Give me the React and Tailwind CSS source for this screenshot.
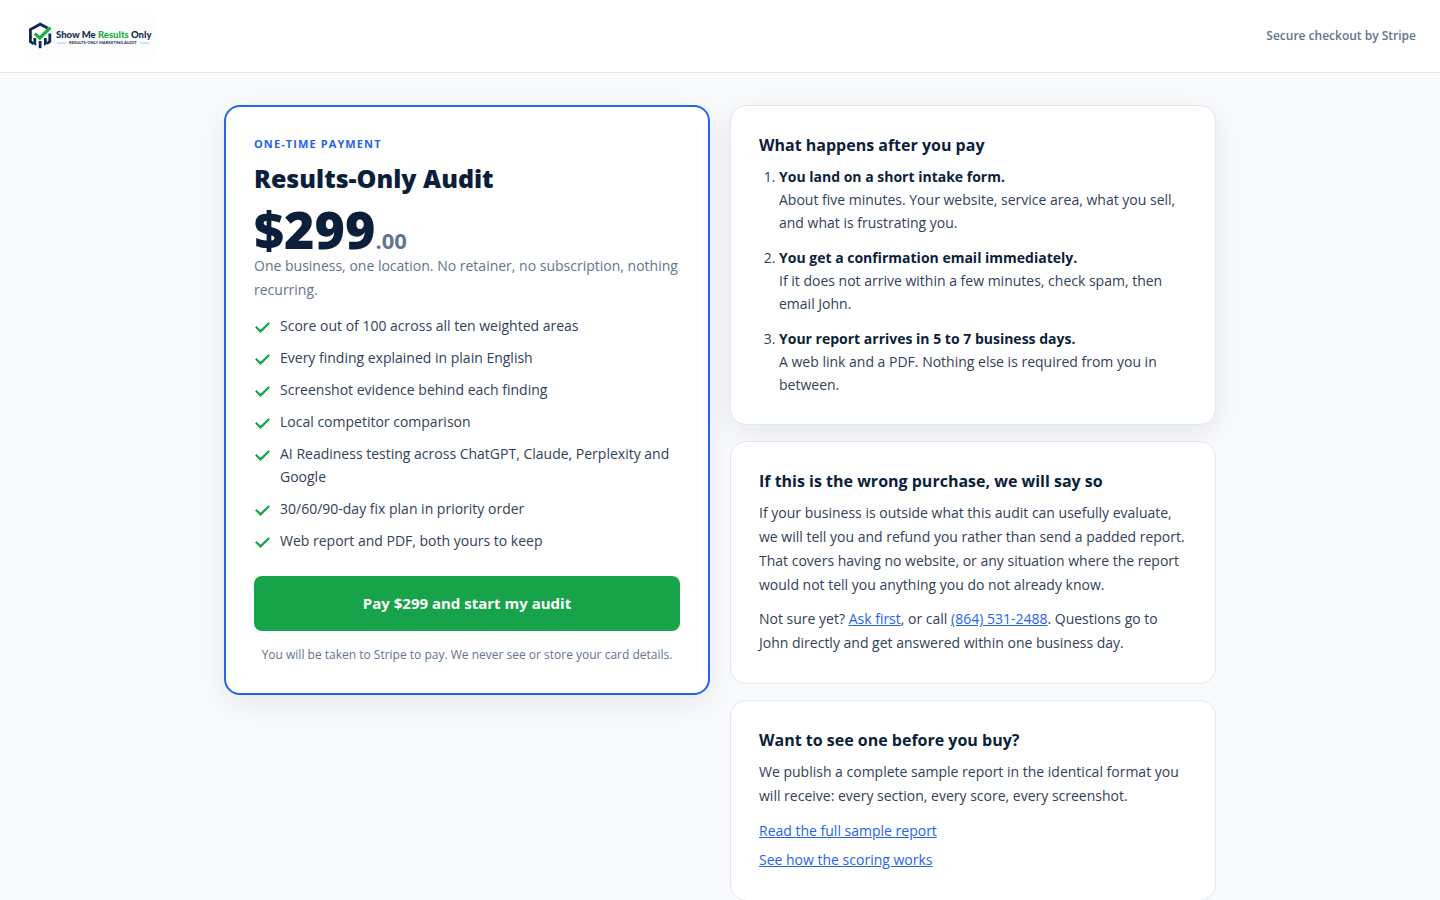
const features = [
  "Score out of 100 across all ten weighted areas",
  "Every finding explained in plain English",
  "Screenshot evidence behind each finding",
  "Local competitor comparison",
  "AI Readiness testing across ChatGPT, Claude, Perplexity and Google",
  "30/60/90-day fix plan in priority order",
  "Web report and PDF, both yours to keep",
];

const steps = [
  {
    title: "You land on a short intake form.",
    body: "About five minutes. Your website, service area, what you sell, and what is frustrating you.",
  },
  {
    title: "You get a confirmation email immediately.",
    body: "If it does not arrive within a few minutes, check spam, then email John.",
  },
  {
    title: "Your report arrives in 5 to 7 business days.",
    body: "A web link and a PDF. Nothing else is required from you in between.",
  },
];

function Logo() {
  return (
    <svg width="132" height="44" viewBox="0 0 132 44" role="img" aria-label="Show Me Results Only">
      <rect width="132" height="44" fill="#fdfdfe" />
      <g fill="none" stroke="#12294f" strokeWidth="2.8">
        <path d="M6.4 24V15.6L16.2 10.2L23.6 14" />
        <path d="M25.8 19.5V27.6L22.8 29.6" />
        <path d="M6.4 22V27.6L9.6 29.8" />
      </g>
      <g fill="#12294f">
        <path d="M9.4 24H12.2V32L9.4 30Z" />
        <path d="M14.7 27H17.5V34.2H14.7Z" />
        <path d="M20 24H22.8V30L20 32Z" />
      </g>
      <path d="M10.8 19.6L15.8 24L26.4 13.6" fill="none" stroke="#16b33a" strokeWidth="3.2" />
      <text x="32" y="24" fontFamily="Lato, sans-serif" fontSize="9.5" fontWeight="900" fill="#12294f">
        Show Me <tspan fill="#16b33a">Results</tspan> Only
      </text>
      <path d="M33 29H42M116 29H125" stroke="#a9c7f5" strokeWidth="1" />
      <text x="45" y="30" fontFamily="Lato, sans-serif" fontSize="4.1" fontWeight="700" fill="#12294f">
        RESULTS-ONLY MARKETING AUDIT
      </text>
    </svg>
  );
}

function Check() {
  return (
    <svg className="mt-[5px] size-4 shrink-0" viewBox="0 0 16 16" fill="none" stroke="#16a34a" strokeWidth="2.2" aria-hidden="true">
      <path d="M1.8 7.8L6.5 12.4L15.2 4" />
    </svg>
  );
}

function TextLink({ href, children }) {
  return (
    <a href={href} className="text-[#2563eb] underline">
      {children}
    </a>
  );
}

function Card({ title, raised, children }) {
  return (
    <section
      className={
        raised
          ? "rounded-2xl border border-slate-200 bg-white p-7 shadow-[0_8px_30px_rgba(15,23,42,0.08)]"
          : "rounded-2xl border border-slate-200 bg-white p-7"
      }
    >
      <h2 className="mb-[9px] text-base leading-[22px] font-bold text-[#0b1f3a]">{title}</h2>
      {children}
    </section>
  );
}

export default function App() {
  return (
    <div className="min-h-screen bg-slate-50 font-['Open_Sans',sans-serif] text-slate-700">
      <header className="border-b border-slate-200 bg-white">
        <div className="flex h-18 items-center justify-between px-6">
          <a href="#home">
            <Logo />
          </a>
          <span className="text-xs font-semibold text-slate-500">Secure checkout by Stripe</span>
        </div>
      </header>

      <main className="mx-auto grid max-w-[1040px] items-start gap-5 px-6 pt-8 pb-8 md:grid-cols-2">
        <section className="rounded-2xl border-2 border-[#2563eb] bg-white p-7 shadow-[0_8px_30px_rgba(15,23,42,0.08)]">
          <p className="text-[11px] leading-[18px] font-bold tracking-widest text-[#2563eb] uppercase">One-time payment</p>
          <h1 className="mt-2 text-[25px] leading-[35px] font-extrabold text-[#0b1f3a]">Results-Only Audit</h1>
          <p className="mt-2 text-[52px] leading-[50px] font-extrabold text-[#0b1f3a]">
            $299<span className="text-[22px] leading-none font-bold text-slate-500">.00</span>
          </p>
          <p className="text-sm leading-6 text-slate-500">
            One business, one location. No retainer, no subscription, nothing recurring.
          </p>
          <ul className="mt-3 flex flex-col gap-[9px] text-sm leading-[23px]">
            {features.map((feature) => (
              <li key={feature} className="flex gap-2.5">
                <Check />
                <span>{feature}</span>
              </li>
            ))}
          </ul>
          <button type="button" className="mt-6 h-[55px] w-full rounded-lg bg-[#16a34a] text-[15px] font-bold text-white">
            Pay $299 and start my audit
          </button>
          <p className="mt-3.5 text-center text-xs leading-5 text-slate-500">
            You will be taken to Stripe to pay. We never see or store your card details.
          </p>
        </section>

        <div className="flex flex-col gap-4">
          <Card title="What happens after you pay" raised>
            <ol className="flex list-decimal flex-col gap-3 pl-5 text-sm leading-[23px]">
              {steps.map((step) => (
                <li key={step.title}>
                  <strong className="block font-bold text-[#0b1f3a]">{step.title}</strong>
                  {step.body}
                </li>
              ))}
            </ol>
          </Card>

          <Card title="If this is the wrong purchase, we will say so">
            <div className="flex flex-col gap-2.5 text-sm leading-6">
              <p>
                If your business is outside what this audit can usefully evaluate, we will tell you and refund you
                rather than send a padded report. That covers having no website, or any situation where the report
                would not tell you anything you do not already know.
              </p>
              <p>
                Not sure yet? <TextLink href="#contact">Ask first</TextLink>, or call{" "}
                <TextLink href="tel:+18645312488">(864) 531-2488</TextLink>. Questions go to John directly and get
                answered within one business day.
              </p>
            </div>
          </Card>

          <Card title="Want to see one before you buy?">
            <div className="text-sm leading-6">
              <p>
                We publish a complete sample report in the identical format you will receive: every section, every
                score, every screenshot.
              </p>
              <ul className="mt-[11px] flex flex-col gap-[5px]">
                <li>
                  <TextLink href="#sample-report">Read the full sample report</TextLink>
                </li>
                <li>
                  <TextLink href="#scoring">See how the scoring works</TextLink>
                </li>
              </ul>
            </div>
          </Card>
        </div>
      </main>
    </div>
  );
}
